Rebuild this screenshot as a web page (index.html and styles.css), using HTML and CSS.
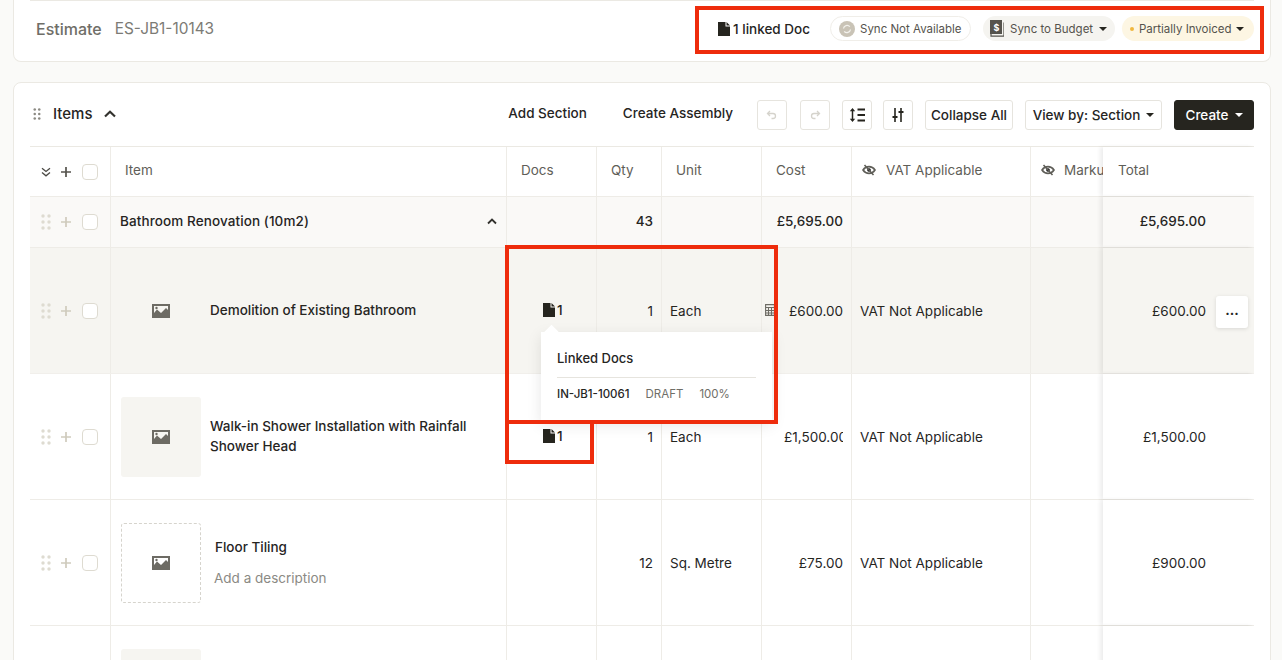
FILE: index.html
```html
<!DOCTYPE html>
<html lang="en">

<head>
    <meta charset="UTF-8">
    <meta name="viewport" content="width=device-width, initial-scale=1.0">
    <title>Estimate</title>
    <link rel="stylesheet" href="styles.css">
</head>

<body>
    <svg class="defs" width="0" height="0">
        <symbol id="doc" viewBox="0 0 12 14"><path d="M0 0h7.500v4.500H12V14H0zM8.500 0 12 3.500H8.500z" /></symbol>
        <symbol id="pic" viewBox="0 0 18 14"><path fill-rule="evenodd" d="M0 0h18v14H0zM2 2v7l3-3.500 4 3.500 5-5 2 2V2z" /><circle cx="4.500" cy="4" r="1.200" /></symbol>
        <symbol id="dots" viewBox="0 0 10 16"><circle cx="2" cy="2" r="1.700" /><circle cx="8" cy="2" r="1.700" /><circle cx="2" cy="8" r="1.700" /><circle cx="8" cy="8" r="1.700" /><circle cx="2" cy="14" r="1.700" /><circle cx="8" cy="14" r="1.700" /></symbol>
        <symbol id="plus" viewBox="0 0 10 10"><path d="M5 0v10M0 5h10" fill="none" stroke="currentColor" stroke-width="1.700" /></symbol>
        <symbol id="eye-off" viewBox="0 0 14 12"><path d="M1 6c3-4.500 9-4.500 12 0-3 4.500-9 4.500-12 0z" fill="none" stroke="currentColor" stroke-width="1.600" /><circle cx="7" cy="6" r="1.800" /><path d="M2.500 1 11.500 11" stroke="currentColor" stroke-width="1.600" /></symbol>
    </svg>

    <div class="page">
        <section class="card top-card">
            <div class="top-inner">
                <div class="estimate">
                    <span class="estimate-label">Estimate</span>
                    <span class="estimate-no">ES-JB1-10143</span>
                </div>
                <div class="status-bar">
                    <span class="linked"><svg class="doc-icon"><use href="#doc" /></svg>1 linked Doc</span>
                    <span class="chip chip-sync">
                        <svg class="sync-icon" viewBox="0 0 16 16"><circle cx="8" cy="8" r="8" fill="#c9c3b6" /><path d="M4.500 7.500a3.600 3.600 0 0 1 6.300-1.800M11.500 8.500a3.600 3.600 0 0 1-6.300 1.800" fill="none" stroke="#f3f1ec" stroke-width="1.300" /></svg>
                        <span>Sync Not Available</span>
                    </span>
                    <span class="chip chip-budget">
                        <svg class="budget-icon" viewBox="0 0 14 17"><path d="M0 0h12v14H0z" fill="#55534d" /><path d="M1 14v2.200h13V2.500" fill="none" stroke="#55534d" stroke-width="1.200" /><text x="3.400" y="10.500" class="budget-sign">$</text></svg>
                        <span>Sync to Budget</span><i class="caret"></i>
                    </span>
                    <span class="chip chip-invoiced"><i class="dot"></i>Partially Invoiced<i class="caret"></i></span>
                </div>
            </div>
        </section>

        <section class="card items-card">
            <div class="toolbar">
                <div class="toolbar-left">
                    <svg class="items-drag"><use href="#dots" /></svg>
                    <span class="items-title">Items</span>
                    <svg class="items-chevron" viewBox="0 0 12 8"><path d="M1 6.500 6 1.800l5 4.700" fill="none" stroke="#33322e" stroke-width="2.200" /></svg>
                </div>
                <div class="toolbar-right">
                    <span class="link-btn">Add Section</span>
                    <span class="link-btn link-assembly">Create Assembly</span>
                    <span class="btn btn-icon btn-undo"><svg viewBox="0 0 12 10"><path d="M4 1 1.500 3.500 4 6M2 3.500h5a2.500 2.500 0 0 1 0 5H5.500" fill="none" stroke="#d5d3cc" stroke-width="1.300" /></svg></span>
                    <span class="btn btn-icon btn-redo"><svg viewBox="0 0 12 10"><path d="M8 1l2.500 2.500L8 6M10 3.500H5a2.500 2.500 0 0 0 0 5h1.500" fill="none" stroke="#d5d3cc" stroke-width="1.300" /></svg></span>
                    <span class="btn btn-icon btn-spacing"><svg viewBox="0 0 16 16"><path d="M3.500 1 .8 4.300h5.400zM3.500 15 .8 11.700h5.400z" fill="#26251f" /><path d="M3.500 4v8" stroke="#26251f" stroke-width="1.500" /><path d="M8.500 2.500H16M8.500 8H16M8.500 13.500H16" stroke="#26251f" stroke-width="1.800" /></svg></span>
                    <span class="btn btn-icon btn-columns"><svg viewBox="0 0 12 16"><path d="M3 1v14M9 1v14" stroke="#26251f" stroke-width="1.600" /><path d="M.5 9h5v2h-5zM6.500 4h5v2h-5z" fill="#26251f" /></svg></span>
                    <span class="btn btn-collapse">Collapse All</span>
                    <span class="btn btn-view">View by: Section<i class="caret"></i></span>
                    <span class="btn btn-create">Create<i class="caret caret-white"></i></span>
                </div>
            </div>

            <div class="table">
                <div class="row row-head">
                    <div class="cell col-handle">
                        <svg class="head-chevrons" viewBox="0 0 10 10"><path d="M1 1.200 5 4.500l4-3.300M1 5.500 5 8.800l4-3.300" fill="none" stroke="#4b4a45" stroke-width="1.300" /></svg>
                        <svg class="plus-icon plus-dark"><use href="#plus" /></svg>
                        <i class="check"></i>
                    </div>
                    <div class="cell head-pad">Item</div>
                    <div class="cell head-pad">Docs</div>
                    <div class="cell head-pad">Qty</div>
                    <div class="cell head-pad">Unit</div>
                    <div class="cell head-pad">Cost</div>
                    <div class="cell head-vat"><svg class="eye-icon"><use href="#eye-off" /></svg>VAT Applicable</div>
                    <div class="cell head-markup"><svg class="eye-icon"><use href="#eye-off" /></svg>Markup</div>
                    <div class="cell col-total head-total">Total</div>
                </div>

                <div class="row row-section">
                    <div class="cell col-handle">
                        <svg class="drag-icon"><use href="#dots" /></svg>
                        <svg class="plus-icon"><use href="#plus" /></svg>
                        <i class="check"></i>
                    </div>
                    <div class="cell section-name">
                        <span>Bathroom Renovation (10m2)</span>
                        <svg class="section-chevron" viewBox="0 0 10 7"><path d="M1 5.500 5 1.500l4 4" fill="none" stroke="#33322e" stroke-width="1.800" /></svg>
                    </div>
                    <div class="cell"></div>
                    <div class="cell cell-right">43</div>
                    <div class="cell"></div>
                    <div class="cell cell-cost"><span class="amount">£5,695.00</span></div>
                    <div class="cell"></div>
                    <div class="cell"></div>
                    <div class="cell col-total">£5,695.00</div>
                </div>

                <div class="row row-item row-hover">
                    <div class="cell col-handle">
                        <svg class="drag-icon"><use href="#dots" /></svg>
                        <svg class="plus-icon"><use href="#plus" /></svg>
                        <i class="check"></i>
                    </div>
                    <div class="cell cell-item">
                        <div class="thumb"><svg class="pic-icon"><use href="#pic" /></svg></div>
                        <div class="item-name">Demolition of Existing Bathroom</div>
                    </div>
                    <div class="cell cell-docs"><svg class="doc-icon"><use href="#doc" /></svg>1</div>
                    <div class="cell cell-right">1</div>
                    <div class="cell cell-unit">Each</div>
                    <div class="cell cell-cost">
                        <svg class="calc-icon" viewBox="0 0 10 12"><path d="M.6.600h8.800v10.800H.6zM.6 3.500h8.800M.6 6.500h8.800M.6 9h8.800M3.500 3.500v8M6.500 3.500v8" fill="none" stroke="#6d6b64" stroke-width="1.100" /></svg>
                        <span class="amount">£600.00</span>
                    </div>
                    <div class="cell cell-vat">VAT Not Applicable</div>
                    <div class="cell"></div>
                    <div class="cell col-total">£600.00<span class="more-btn">...</span></div>
                </div>

                <div class="row row-item">
                    <div class="cell col-handle">
                        <svg class="drag-icon"><use href="#dots" /></svg>
                        <svg class="plus-icon"><use href="#plus" /></svg>
                        <i class="check"></i>
                    </div>
                    <div class="cell cell-item">
                        <div class="thumb thumb-filled"><svg class="pic-icon"><use href="#pic" /></svg></div>
                        <div class="item-name">Walk-in Shower Installation with Rainfall Shower Head</div>
                    </div>
                    <div class="cell cell-docs"><svg class="doc-icon"><use href="#doc" /></svg>1</div>
                    <div class="cell cell-right">1</div>
                    <div class="cell cell-unit">Each</div>
                    <div class="cell cell-cost"><span class="amount">£1,500.00</span></div>
                    <div class="cell cell-vat">VAT Not Applicable</div>
                    <div class="cell"></div>
                    <div class="cell col-total">£1,500.00</div>
                </div>

                <div class="row row-item">
                    <div class="cell col-handle">
                        <svg class="drag-icon"><use href="#dots" /></svg>
                        <svg class="plus-icon"><use href="#plus" /></svg>
                        <i class="check"></i>
                    </div>
                    <div class="cell cell-item">
                        <div class="thumb thumb-empty"><svg class="pic-icon"><use href="#pic" /></svg></div>
                        <div class="item-text">
                            <div class="item-name">Floor Tiling</div>
                            <div class="item-desc">Add a description</div>
                        </div>
                    </div>
                    <div class="cell"></div>
                    <div class="cell cell-right">12</div>
                    <div class="cell cell-unit">Sq. Metre</div>
                    <div class="cell cell-cost"><span class="amount">£75.00</span></div>
                    <div class="cell cell-vat">VAT Not Applicable</div>
                    <div class="cell"></div>
                    <div class="cell col-total">£900.00</div>
                </div>

                <div class="row row-item">
                    <div class="cell col-handle"></div>
                    <div class="cell cell-item">
                        <div class="thumb thumb-filled"></div>
                    </div>
                    <div class="cell"></div>
                    <div class="cell"></div>
                    <div class="cell"></div>
                    <div class="cell"></div>
                    <div class="cell"></div>
                    <div class="cell"></div>
                    <div class="cell col-total"></div>
                </div>
            </div>
        </section>

        <!-- linked docs popover -->
        <div class="popover">
            <i class="popover-arrow"></i>
            <div class="popover-title">Linked Docs</div>
            <div class="popover-row">
                <span class="popover-no">IN-JB1-10061</span>
                <span>DRAFT</span>
                <span>100%</span>
            </div>
        </div>

        <!-- red callouts -->
        <div class="mark mark-status"></div>
        <div class="mark mark-popover"></div>
        <div class="mark mark-doc"></div>
    </div>
</body>

</html>
```

FILE: styles.css
```css
* {
    box-sizing: border-box;
}

html,
body {
    margin: 0;
    height: 660px;
    overflow: hidden;
}

body {
    background-color: #fafaf8;
    color: #26251f;
    font-family: "Inter", "Liberation Sans", sans-serif;
    font-size: 13.5px;
}

.defs {
    position: absolute;
}

.page {
    position: relative;
    height: 660px;
    padding: 0 11px 0 13px;
    overflow: hidden;
}

.card {
    background-color: #fff;
    border: 1px solid #ebe9e3;
}

/* top card */
.top-card {
    height: 62px;
    border-top: none;
    border-radius: 0 0 8px 8px;
    padding: 0 16px;
}

.top-inner {
    height: 100%;
    border-top: 1px solid #ebe9e3;
    display: flex;
    align-items: center;
    justify-content: space-between;
    padding-bottom: 5px;
}

.estimate {
    display: flex;
    align-items: center;
    gap: 13px;
    padding-left: 6px;
}

.estimate-label {
    font-size: 16px;
    font-weight: 500;
    color: #6f6e68;
}

.estimate-no {
    font-size: 15.4px;
    color: #7c7b75;
}

.status-bar {
    display: flex;
    align-items: center;
}

.linked {
    display: flex;
    align-items: center;
    gap: 3px;
    font-weight: 500;
    margin-right: 20px;
}

.doc-icon {
    width: 12px;
    height: 14px;
    fill: #26251f;
}

.chip {
    display: flex;
    align-items: center;
    height: 25px;
    border-radius: 13px;
    font-size: 11.5px;
    color: #55534d;
    width: 132px;
    white-space: nowrap;
}

.chip-sync {
    width: 141px;
    border: 1px solid #f0eee9;
    padding-left: 8px;
    margin-right: 12px;
}

.sync-icon {
    width: 16px;
    height: 16px;
    margin-right: 5px;
}

.chip-budget {
    background-color: #f5f4f0;
    padding-left: 7px;
    margin-right: 7px;
}

.budget-icon {
    width: 14px;
    height: 17px;
    margin-right: 6px;
}

.budget-sign {
    font-size: 9px;
    font-weight: 700;
    fill: #fff;
}

.chip-invoiced {
    background-color: #fdf6e3;
    padding-left: 8px;
}

.dot {
    width: 4px;
    height: 4px;
    border-radius: 50%;
    background-color: #f0b73f;
    margin-right: 5px;
}

.caret {
    display: inline-block;
    width: 0;
    height: 0;
    border-left: 4px solid transparent;
    border-right: 4px solid transparent;
    border-top: 4px solid #26251f;
    margin-left: 6px;
}

.chip-invoiced .caret {
    margin-left: 4px;
}

.caret-white {
    border-top-color: #fff;
}

/* items card */
.items-card {
    margin-top: 20px;
    height: 600px;
    border-radius: 8px 8px 0 0;
    padding: 0 16px;
}

.toolbar {
    height: 63px;
    display: flex;
    align-items: center;
    justify-content: space-between;
    padding-top: 1px;
}

.toolbar-left {
    display: flex;
    align-items: center;
    padding-left: 3px;
    padding-bottom: 3px;
}

.items-drag {
    width: 8px;
    height: 12px;
    fill: #8c8a83;
    margin-right: 12px;
}

.items-title {
    font-size: 15px;
    font-weight: 500;
    margin-right: 12px;
}

.items-chevron {
    width: 12px;
    height: 8px;
}

.toolbar-right {
    display: flex;
    align-items: center;
}

.link-btn {
    font-weight: 500;
    margin-right: 36px;
    padding-bottom: 5px;
}

.link-assembly {
    margin-right: 24px;
}

.btn {
    display: flex;
    align-items: center;
    justify-content: center;
    height: 30px;
    border: 1px solid #e6e4de;
    border-radius: 3px;
    font-weight: 500;
    background-color: #fff;
}

.btn-icon {
    width: 30px;
}

.btn-undo svg,
.btn-redo svg {
    width: 12px;
    height: 10px;
}

.btn-undo {
    margin-right: 13px;
}

.btn-spacing {
    margin-right: 11px;
}

.btn-redo,
.btn-columns {
    margin-right: 12px;
}

.btn-spacing svg {
    width: 16px;
    height: 16px;
}

.btn-columns svg {
    width: 12px;
    height: 16px;
}

.btn-collapse {
    width: 88px;
    margin-right: 12px;
}

.btn-view {
    width: 137px;
    margin-right: 12px;
}

.btn-create {
    width: 80px;
    background-color: #26251f;
    border-color: #26251f;
    color: #fff;
}

/* table */
.table {
    border-top: 1px solid #ebe9e3;
}

.row {
    display: grid;
    grid-template-columns: 81px 396px 90px 65px 100px 90px 179px 72px 151px;
    border-bottom: 1px solid #eeece7;
}

.row-head {
    height: 50px;
    color: #5f5e58;
}

.row-section {
    height: 51px;
    background-color: #faf9f7;
    font-weight: 500;
}

.row-item {
    height: 126px;
}

.row-hover {
    background-color: #f6f5f1;
    border-bottom-color: #f1efeb;
}

.cell {
    display: flex;
    align-items: center;
    border-right: 1px solid #eeece7;
    min-width: 0;
    overflow: hidden;
    white-space: nowrap;
}

.row .cell:nth-child(8) {
    border-right: none;
}

.row-section .cell:not(.col-handle) {
    padding-bottom: 2px;
}

.col-handle {
    padding-left: 11px;
    gap: 10px;
}

.drag-icon {
    width: 10px;
    height: 16px;
    fill: #dedbd1;
}

.plus-icon {
    width: 10px;
    height: 10px;
    color: #cfcbbd;
}

.plus-dark {
    color: #55534d;
}

.head-chevrons {
    width: 10px;
    height: 10px;
}

.check {
    width: 16px;
    height: 16px;
    background-color: #fff;
    border: 1px solid #dedbd1;
    border-radius: 4px;
    margin-left: 1px;
}

.head-pad {
    padding: 0 0 3px 14px;
}

.head-vat {
    padding: 0 0 3px 10px;
    gap: 10px;
}

.head-markup {
    padding: 0 0 3px 10px;
    gap: 9px;
}

.eye-icon {
    width: 14px;
    height: 12px;
    flex: none;
}

.section-name {
    padding: 0 9px;
    justify-content: space-between;
    letter-spacing: 0.1px;
}

.section-chevron {
    width: 10px;
    height: 7px;
}

.cell-right {
    justify-content: flex-end;
    padding-right: 8px;
}

.cell-unit {
    padding-left: 8px;
}

.cell-vat {
    padding-left: 8px;
}

.cell-cost {
    position: relative;
    padding: 0 8px 0 22px;
}

.row-section .cell-cost {
    padding-left: 14px;
}

.amount {
    display: block;
    width: 100%;
    overflow: hidden;
    text-align: right;
}

.calc-icon {
    position: absolute;
    left: 3px;
    top: 56px;
    width: 10px;
    height: 12px;
}

.cell-docs {
    padding-left: 36px;
    gap: 2px;
    font-weight: 500;
    padding-bottom: 2px;
}

.cell-item {
    padding-left: 10px;
    gap: 9px;
}

.thumb {
    width: 80px;
    height: 80px;
    flex: none;
    display: flex;
    align-items: center;
    justify-content: center;
    border-radius: 3px;
}

.thumb-filled {
    background-color: #f6f5f1;
}

.thumb-empty {
    border: 1px dashed #d6d4cd;
}

.pic-icon {
    width: 18px;
    height: 14px;
    fill: #6d6b64;
}

.item-name {
    font-weight: 500;
    white-space: normal;
    line-height: 20px;
    max-width: 280px;
    margin-bottom: 2px;
}

.item-text {
    padding: 0 0 2px 5px;
    display: flex;
    flex-direction: column;
    gap: 11px;
}

.item-desc {
    color: #8b8a84;
    margin-left: -1px;
}

.col-total {
    position: relative;
    justify-content: flex-end;
    padding-right: 48px;
    border-right: none;
    background-color: #fff;
    box-shadow: -3px 0 4px rgba(0, 0, 0, 0.07);
    overflow: visible;
}

.row-section .col-total {
    background-color: #faf9f7;
}

.row-hover .col-total {
    background-color: #f6f5f1;
}

.head-total {
    justify-content: flex-start;
    padding: 0 0 3px 15px;
}

.more-btn {
    position: absolute;
    right: 6px;
    top: 48px;
    width: 32px;
    height: 32px;
    display: flex;
    align-items: center;
    justify-content: center;
    padding-bottom: 5px;
    background-color: #fff;
    border-radius: 3px;
    box-shadow: 0 1px 4px rgba(0, 0, 0, 0.12);
    font-weight: 700;
}

/* popover */
.popover {
    position: absolute;
    left: 541px;
    top: 332px;
    width: 231px;
    height: 89px;
    padding: 18px 16px 0;
    background-color: #fff;
    box-shadow: 0 4px 14px rgba(0, 0, 0, 0.1);
}

.popover-arrow {
    position: absolute;
    left: 5px;
    top: -5px;
    width: 11px;
    height: 11px;
    background-color: #fff;
    transform: rotate(45deg);
}

.popover-title {
    position: relative;
    font-size: 13px;
    font-weight: 500;
    padding-bottom: 11px;
    border-bottom: 1px solid #e6e4de;
}

.popover-row {
    display: flex;
    gap: 16px;
    margin-top: 9px;
    font-size: 11.5px;
    color: #6f6e68;
}

.popover-no {
    font-weight: 500;
    color: #26251f;
}

/* red callouts */
.mark {
    position: absolute;
    border: 4px solid #ee2c0c;
    pointer-events: none;
}

.mark-status {
    left: 695px;
    top: 6px;
    width: 569px;
    height: 48px;
}

.mark-popover {
    left: 505px;
    top: 245px;
    width: 273px;
    height: 179px;
}

.mark-doc {
    left: 505px;
    top: 420px;
    width: 89px;
    height: 44px;
    border-top: none;
}
```
